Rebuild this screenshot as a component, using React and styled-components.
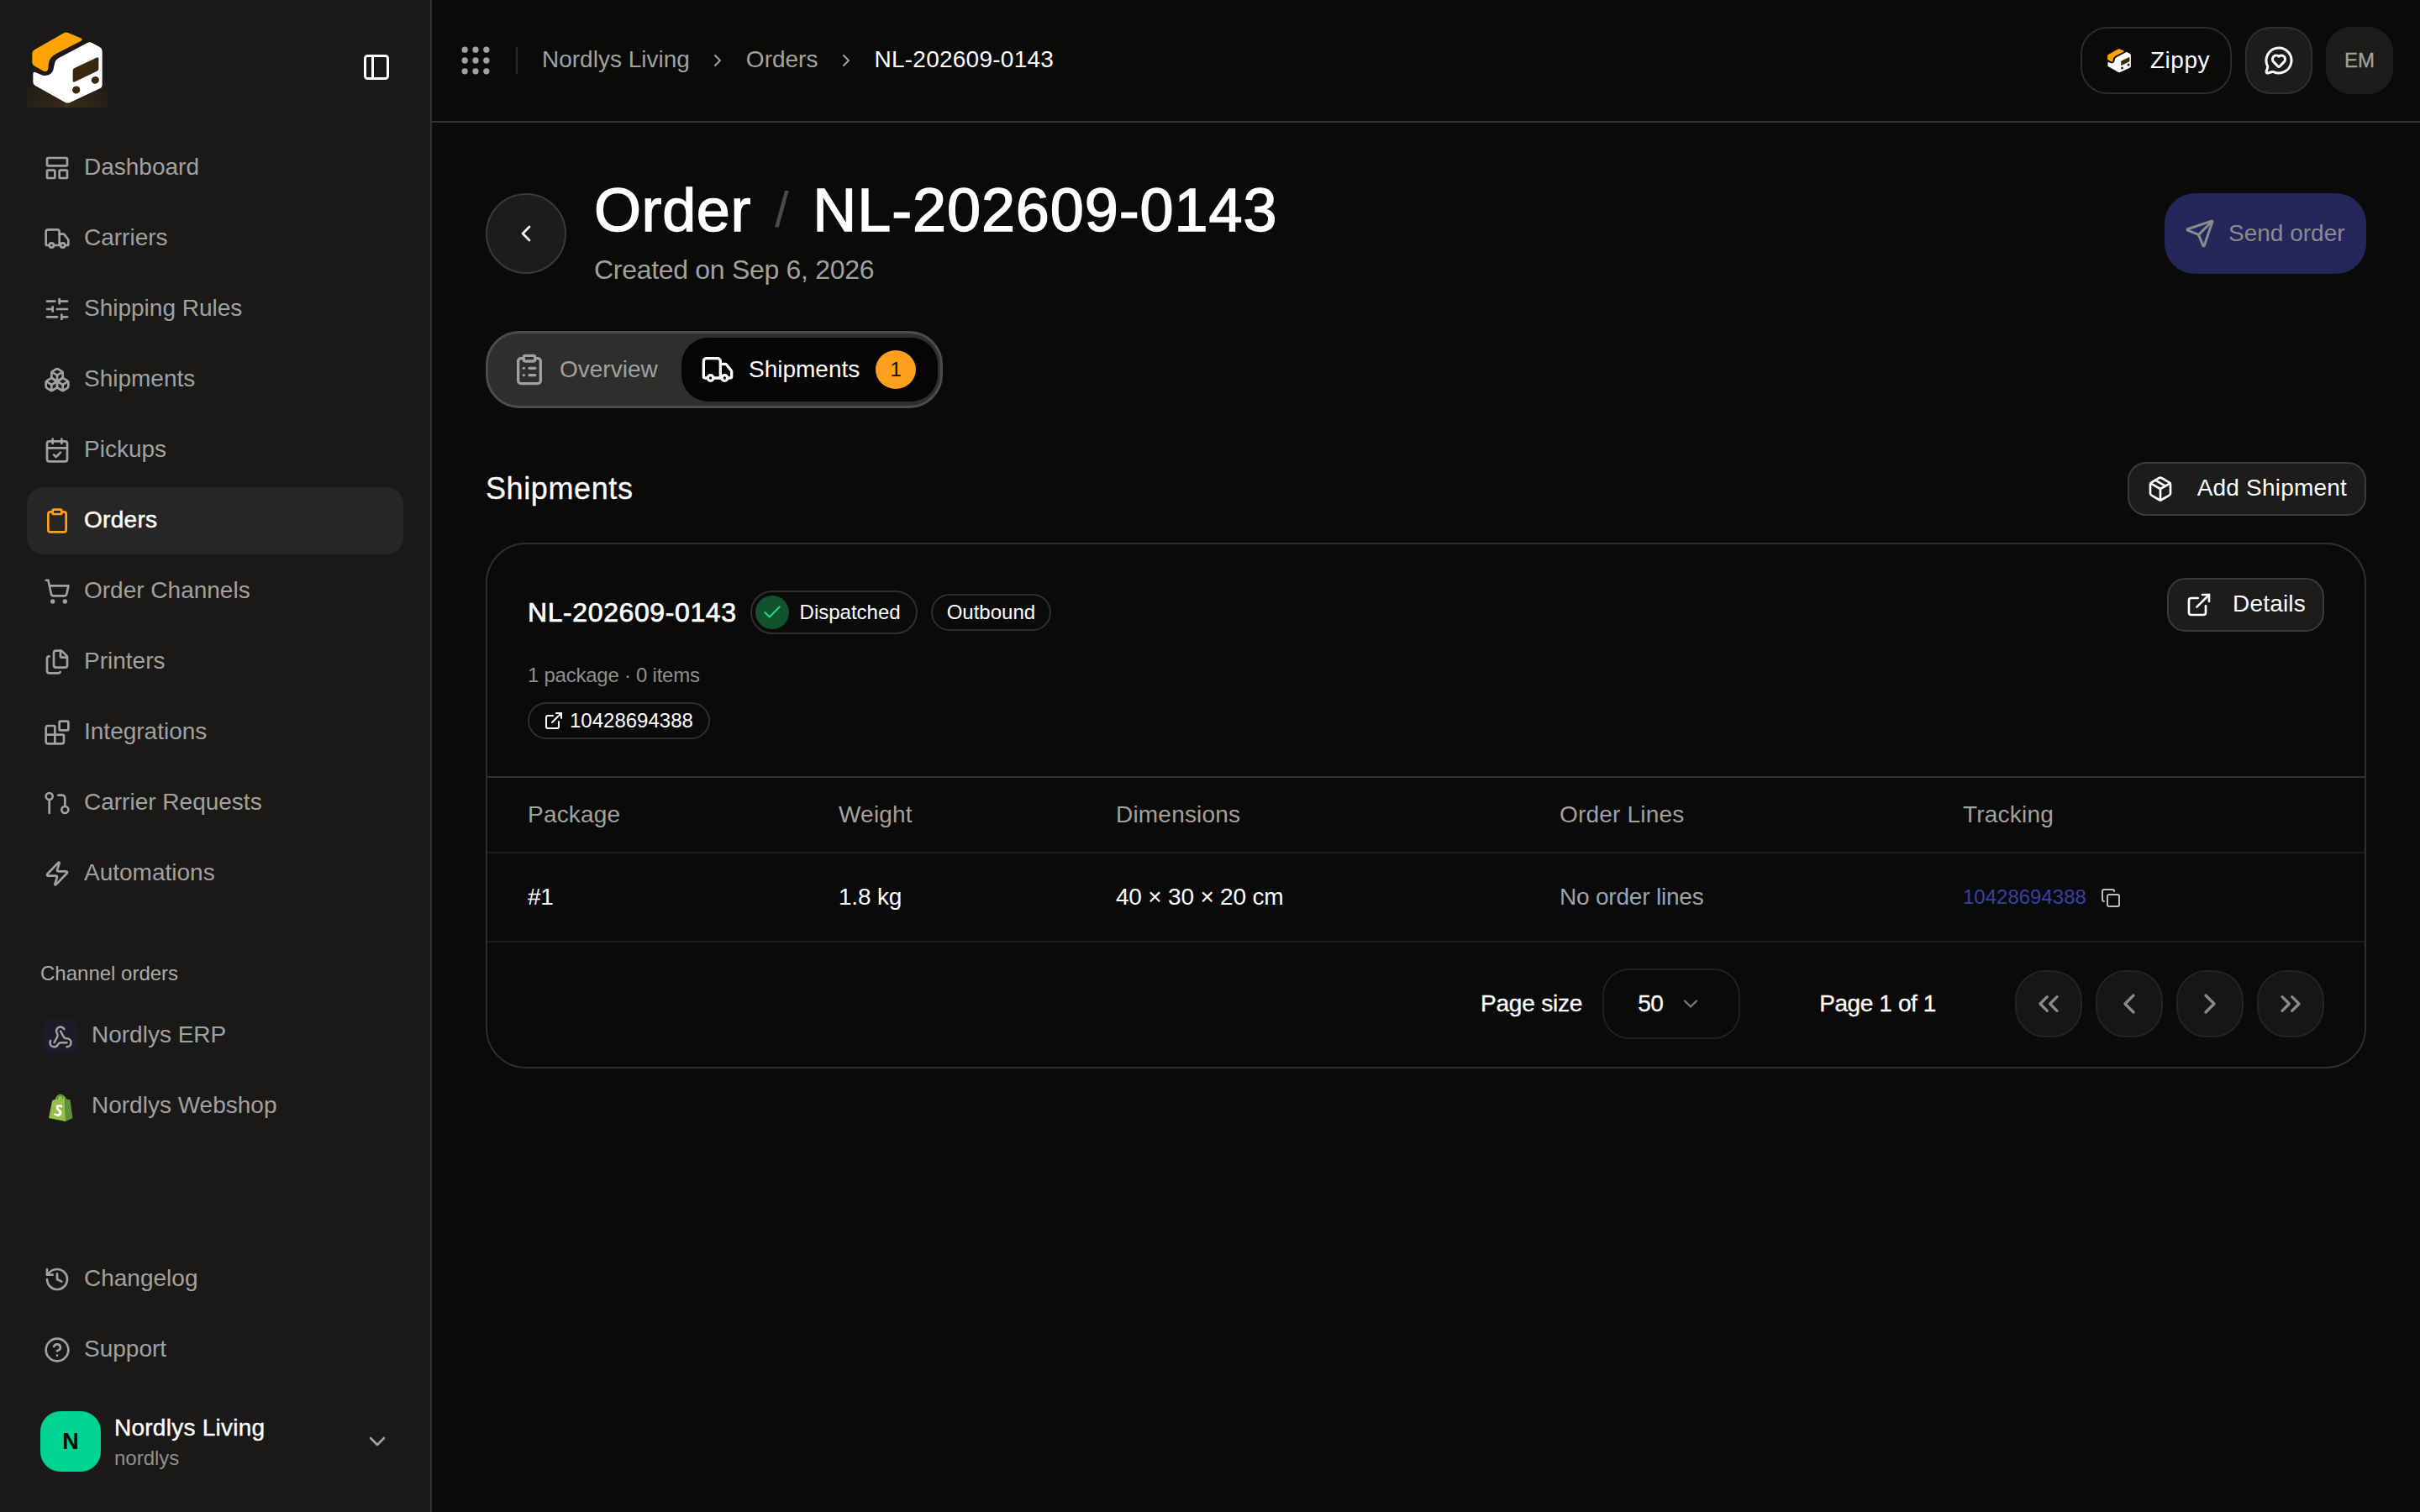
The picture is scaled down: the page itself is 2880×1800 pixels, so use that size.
import React from "react";
import styled, { createGlobalStyle } from "styled-components";
import {
  LayoutPanelTop, Truck, SlidersHorizontal, Boxes, CalendarCheck, Clipboard, ShoppingCart, Files, Blocks, Zap,
  History, CircleHelp, Webhook, ChevronDown, ChevronLeft, ChevronRight, ChevronsLeft, ChevronsRight, PanelLeft,
  Grip, MessageCircleHeart, Send, ClipboardList, Package, ExternalLink, Copy, Check,
} from "lucide-react";

const Global = createGlobalStyle`
  html, body { margin: 0; padding: 0; background: #0a0a09; }
  body { font-family: "Liberation Sans", Arial, sans-serif; color: #fff; }
  * { box-sizing: border-box; }
`;

const Shell = styled.div`display: flex; width: 2880px; height: 1800px; overflow: hidden; background: #0a0a09;`;

const Sidebar = styled.aside`
  width: 514px; flex: none; height: 100%; display: flex; flex-direction: column;
  background: #1a1918; border-right: 2px solid #333231;
`;
const LogoRow = styled.div`
  height: 160px; padding: 32px 46px 32px 32px; display: flex; align-items: center; justify-content: space-between; flex: none;
`;
const LogoBox = styled.div`
  width: 96px; height: 96px;
  background: radial-gradient(ellipse 75% 42% at 50% 100%, rgba(255,160,0,.14), rgba(255,160,0,0));
`;
const ToggleBtn = styled.div`display: flex; color: #fff;`;
const NavList = styled.nav`display: flex; flex-direction: column; gap: 4px; padding: 0 32px;`;
const NavItem = styled.div`
  height: 80px; padding-left: 20px; display: flex; align-items: center; gap: ${p => p.$gap || 16}px; border-radius: 20px;
  font-size: 28px; letter-spacing: ${p => (p.$active ? "0.3px" : "0")}; padding-bottom: 3px;
  color: ${p => (p.$active ? "#fff" : "#a1a1a0")};
  background: ${p => (p.$active ? "#262626" : "transparent")};
  -webkit-text-stroke: ${p => (p.$active ? "0.5px #fff" : "0")};
  svg { flex: none; color: ${p => (p.$active ? "#ff9f1c" : "#a1a1a0")}; margin-bottom: -3px; }
`;
const GroupLabel = styled.div`
  margin: 64px 0 19px; padding-left: 48px; font-size: 24px; line-height: 30px; color: #ababaa; height: 30px;
`;
const ChannelIcon = styled.div`
  width: 40px; height: 40px; border-radius: 8px; display: flex; align-items: center; justify-content: center; flex: none;
  background: ${p => p.$bg || "transparent"}; margin-bottom: -3px;
`;
const Bottom = styled.div`margin-top: auto; padding-bottom: 48px; display: flex; flex-direction: column;`;
const Account = styled.div`
  margin-top: 33px; padding: 0 47px 0 48px; display: flex; align-items: center; gap: 16px; height: 72px;
`;
const Avatar = styled.div`
  width: 72px; height: 72px; border-radius: 24px; background: #00d492; color: #0a0a09; font-size: 27px; font-weight: 700;
  display: flex; align-items: center; justify-content: center; flex: none;
`;
const AccountText = styled.div`flex: 1; display: flex; flex-direction: column; gap: 5px;`;
const AccountName = styled.div`font-size: 28px; line-height: 34px; color: #fff; letter-spacing: 0.25px; -webkit-text-stroke: .4px #fff;`;
const AccountSlug = styled.div`font-size: 24px; line-height: 28px; color: #8f8f8e;`;
const AccountChevron = styled.div`display: flex; color: #a1a1a0;`;

const Content = styled.div`flex: 1; min-width: 0; display: flex; flex-direction: column;`;
const Header = styled.header`
  height: 146px; flex: none; border-bottom: 2px solid #333231; display: flex; align-items: center; padding: 0 32px 0 30px;
`;
const GripWrap = styled.div`display: flex; color: #a1a1a0; margin-right: 26px;`;
const VDivider = styled.div`width: 2px; height: 32px; background: #2b2b2a; margin-right: 29px;`;
const Crumbs = styled.div`display: flex; align-items: center; flex: 1; font-size: 28px; padding-bottom: 2px; letter-spacing: 0.1px;`;
const Crumb = styled.span`color: ${p => (p.$current ? "#fff" : "#a1a1a0")}; letter-spacing: ${p => (p.$current ? "0.25px" : "0")};`;
const CrumbSep = styled.span`display: flex; color: #a1a1a0; margin: 2px 21.5px 0 21.5px;`;
const HeaderRight = styled.div`display: flex; align-items: center; gap: 16px;`;
const ZippyBtn = styled.div`
  width: 180px; height: 80px; border-radius: 32px; border: 2px solid #2c2c2b; background: #0a0a09; display: flex; align-items: center;
  padding-left: 28px; gap: 21px; font-size: 28px; color: #fff; letter-spacing: 0.5px;
`;
const SquareBtn = styled.div`
  width: 80px; height: 80px; border-radius: 30px; background: #1c1c1b; display: flex; align-items: center; justify-content: center;
  border: 2px solid ${p => (p.$plain ? "#1c1c1b" : "#2e2e2d")}; color: ${p => (p.$plain ? "#a1a1a0" : "#fff")}; font-size: 24px;
  -webkit-text-stroke: ${p => (p.$plain ? ".3px #a1a1a0" : "0")};
`;

const Main = styled.main`flex: 1; padding: 64px 64px 0;`;
const TitleRow = styled.div`display: flex; align-items: center; justify-content: space-between;`;
const TitleLeft = styled.div`display: flex; align-items: center; gap: 33px;`;
const BackBtn = styled.div`
  width: 96px; height: 96px; border-radius: 50%; background: #1c1c1b; border: 2px solid #3a3a39; display: flex; align-items: center;
  justify-content: center; color: #fff;
`;
const TitleBlock = styled.div`display: flex; flex-direction: column;`;
const Title = styled.h1`
  margin: 0; font-size: 72px; font-weight: 400; line-height: 80px; color: #fff; -webkit-text-stroke: 1.4px #fff; letter-spacing: 0.6px;
  display: flex; gap: 28px;
`;
const TitleId = styled.span`letter-spacing: 0.9px;`;
const TitleSlash = styled.span`color: #4a4a49; -webkit-text-stroke: 0; font-size: 60px;`;
const Subtitle = styled.div`margin-top: 8px; font-size: 32px; line-height: 47px; color: #a1a1a0; letter-spacing: -0.3px;`;
const PrimaryBtn = styled.div`
  height: 96px; width: 240px; border-radius: 36px; background: #24265a; display: flex; align-items: center; padding-left: 24px; gap: 16px;
  font-size: 28px; color: #8a8a8f;
`;

const TabBar = styled.div`
  margin-top: 49px; width: 544px; height: 92px; border-radius: 40px; background: #2e2e2d; border: 3px solid #4c4c4b;
  display: flex; align-items: center; padding: 0 3px 0 29px;
`;
const TabPlain = styled.div`display: flex; align-items: center; gap: 16px; flex: 1; font-size: 28px; color: #a1a1a0; padding-bottom: 1px; svg { margin-bottom: -1px; }`;
const TabActive = styled.div`
  width: 305px; height: 76px; border-radius: 32px; background: #050505; display: flex; align-items: center; padding: 0 0 1px 23px; gap: 17px;
  font-size: 28px; color: #fff; svg { margin-bottom: -1px; }
`;
const CountBadge = styled.span`
  width: 48px; height: 46px; border-radius: 50%; background: #ff9f1c; color: #111; font-size: 24px; display: flex; align-items: center;
  justify-content: center; margin-left: 2px;
`;

const SectionHead = styled.div`margin-top: 64px; height: 64px; display: flex; align-items: center; justify-content: space-between;`;
const SectionTitle = styled.h2`margin: 0; font-size: 36px; font-weight: 400; letter-spacing: .6px; color: #fff; -webkit-text-stroke: .3px #fff;`;
const SoftBtn = styled.div`
  height: 64px; border-radius: 22px; background: #1c1c1b; border: 2px solid #3a3a39; display: flex; align-items: center;
  padding: 0 ${p => p.$px}px 2px; gap: ${p => p.$gap}px; font-size: 28px; color: #fff; letter-spacing: 0.2px;
  svg { margin-bottom: -2px; }
`;

const Card = styled.section`margin-top: 32px; height: 626px; border-radius: 48px; border: 2px solid #2f2f2e; background: #0a0a0a; overflow: hidden;`;
const CardTop = styled.div`height: 278px; padding: 40px 48px 0; display: flex; justify-content: space-between; border-bottom: 2px solid #333231;`;
const ShipMeta = styled.div`display: flex; flex-direction: column;`;
const ShipLine = styled.div`display: flex; align-items: center; height: 64px; margin-top: 9px;`;
const ShipId = styled.div`font-size: 32px; letter-spacing: .6px; color: #fff; -webkit-text-stroke: .7px #fff;`;
const Pill = styled.div`
  display: flex; align-items: center; border-radius: 999px; border: 2px solid #2f2f2e; font-size: 24px; color: #fff; height: ${p => p.$h}px;
  padding: ${p => p.$pad}; margin-left: ${p => p.$ml || 0}px; gap: ${p => p.$gap || 0}px;
`;
const StatusDot = styled.span`
  width: 40px; height: 40px; border-radius: 50%; background: #11522e; color: #19d97b; display: flex; align-items: center; justify-content: center;
`;
const ShipCounts = styled.div`margin-top: 29px; font-size: 24px; line-height: 28px; color: #8f8f8e; letter-spacing: -0.25px;`;
const TrackingPill = styled(Pill)`margin-top: 18px; align-self: flex-start; svg { flex: none; }`;

const Row = styled.div`
  display: grid; grid-template-columns: 370px 330px 528px 480px 1fr; align-items: center; padding: 0 48px; height: ${p => p.$h}px;
  border-bottom: 2px solid #1d1d1c; font-size: 28px; color: ${p => (p.$head ? "#a1a1a0" : "#fff")};
  letter-spacing: ${p => (p.$head ? "0.2px" : "-0.2px")};
`;
const MutedCell = styled.div`color: #9ca3af;`;
const TrackCell = styled.div`display: flex; align-items: center; gap: 17px; font-size: 24px; color: #3a3fa6; letter-spacing: 0; svg { color: #bdbdbc; margin-top: 2px; }`;

const Pager = styled.div`height: 146px; padding: 0 48px; display: flex; align-items: center; justify-content: flex-end; font-size: 28px; color: #fff; -webkit-text-stroke: .3px #fff; letter-spacing: -0.4px;`;
const SizeLabel = styled.div`margin-right: 24px; letter-spacing: -0.2px;`;
const SizeSelect = styled.div`
  width: 164px; height: 84px; border-radius: 32px; border: 2px solid #1f1f1e; display: flex; align-items: center; padding-left: 40px; gap: 18px;
  svg { color: #777; }
`;
const PageLabel = styled.div`margin: 0 94px;`;
const PagerBtns = styled.div`display: flex; gap: 16px;`;
const PagerBtn = styled.div`
  width: 80px; height: 80px; border-radius: 36px; background: #161616; border: 2px solid #232322; display: flex; align-items: center;
  justify-content: center; color: #8a8a89;
`;

const Logo = ({ size = 96 }) => (
  <svg width={size} height={size} viewBox="36 36 288 288">
    <path fill="#ffa300" d="M55 130 Q55 122 63 118 L168 58 Q175 54 183 57 L228 76 Q238 81 228 87 L142 131 Q116 144 114 166 L112 184 Q110 199 96 194 L64 176 Q55 171 55 164 Z" />
    <path fill="#fff" d="M252 93 Q260 88 268 93 L296 108 Q305 113 305 122 L305 243 Q305 252 297 256 L190 306 Q181 310 172 305 L66 246 Q58 241 58 233 L58 204 Q58 194 68 199 L92 209 Q128 216 133 176 Q135 155 150 147 Z" />
    <path fill="#37280f" d="M200 192 Q200 186 206 183 L284 146 Q292 142 292 150 L292 185 Q292 191 286 194 L208 232 Q200 236 200 228 Z" />
    <ellipse cx="212" cy="261" rx="14" ry="13" fill="#37280f" transform="rotate(-25 212 261)" />
    <ellipse cx="280" cy="226" rx="14" ry="13" fill="#37280f" transform="rotate(-25 280 226)" />
  </svg>
);

const PullIcon = ({ size = 32 }) => (
  <svg width={size} height={size} viewBox="0 0 24 24" fill="none" stroke="currentColor" strokeWidth="2" strokeLinecap="round" strokeLinejoin="round">
    <circle cx="5" cy="6" r="3" />
    <path d="M5 9v12" />
    <circle cx="19" cy="18" r="3" />
    <path d="M13 5h3.5a2.5 2.5 0 0 1 2.5 2.5V15" />
  </svg>
);

const ShopifyBag = () => (
  <svg width="30" height="34" viewBox="0 0 30 34">
    <path fill="#95bf47" d="M1 29 L5 9 Q5 8 6.500 7.500 L9 6.800 C10 2.500 13 .6 15.500 .8 Q18 1 20.500 4 L21 33 Z" />
    <path fill="#5e8e3e" d="M20.500 4 L23 6.800 L26.500 7.200 L29.500 29 L21 33 Z" />
    <path fill="none" stroke="#4f7a33" strokeWidth="1.200" d="M11 7 C11.500 4 13 2 15.500 2.200 C17.500 2.400 18 4 18 6" />
    <path fill="none" stroke="#fff" strokeWidth="2.800" strokeLinecap="round" d="M16 15 C13.500 13.600 10.500 14.600 11 17 C11.500 19.400 15.500 19.600 15 23 C14.500 26 11 26 8.500 24.600" />
  </svg>
);

const mainNav = [
  ["Dashboard", LayoutPanelTop], ["Carriers", Truck], ["Shipping Rules", SlidersHorizontal], ["Shipments", Boxes],
  ["Pickups", CalendarCheck], ["Orders", Clipboard, true], ["Order Channels", ShoppingCart], ["Printers", Files],
  ["Integrations", Blocks], ["Carrier Requests", PullIcon], ["Automations", Zap],
];

export default function App() {
  return (
    <Shell>
      <Global />
      <Sidebar>
        <LogoRow>
          <LogoBox><Logo /></LogoBox>
          <ToggleBtn><PanelLeft size={36} /></ToggleBtn>
        </LogoRow>
        <NavList>
          {mainNav.map(([label, Icon, active]) => (
            <NavItem key={label} $active={active}><Icon size={32} />{label}</NavItem>
          ))}
        </NavList>
        <GroupLabel>Channel orders</GroupLabel>
        <NavList>
          <NavItem $gap={17}>
            <ChannelIcon $bg="#1c1c28"><Webhook size={30} /></ChannelIcon>Nordlys ERP
          </NavItem>
          <NavItem $gap={17}>
            <ChannelIcon><ShopifyBag /></ChannelIcon>Nordlys Webshop
          </NavItem>
        </NavList>
        <Bottom>
          <NavList>
            <NavItem><History size={32} />Changelog</NavItem>
            <NavItem><CircleHelp size={32} />Support</NavItem>
          </NavList>
          <Account>
            <Avatar>N</Avatar>
            <AccountText>
              <AccountName>Nordlys Living</AccountName>
              <AccountSlug>nordlys</AccountSlug>
            </AccountText>
            <AccountChevron><ChevronDown size={32} /></AccountChevron>
          </Account>
        </Bottom>
      </Sidebar>
      <Content>
        <Header>
          <GripWrap><Grip size={44} /></GripWrap>
          <VDivider />
          <Crumbs>
            <Crumb>Nordlys Living</Crumb>
            <CrumbSep><ChevronRight size={24} /></CrumbSep>
            <Crumb>Orders</Crumb>
            <CrumbSep><ChevronRight size={24} /></CrumbSep>
            <Crumb $current>NL-202609-0143</Crumb>
          </Crumbs>
          <HeaderRight>
            <ZippyBtn><Logo size={32} />Zippy</ZippyBtn>
            <SquareBtn><MessageCircleHeart size={36} /></SquareBtn>
            <SquareBtn $plain>EM</SquareBtn>
          </HeaderRight>
        </Header>
        <Main>
          <TitleRow>
            <TitleLeft>
              <BackBtn><ChevronLeft size={32} /></BackBtn>
              <TitleBlock>
                <Title>Order <TitleSlash>/</TitleSlash> <TitleId>NL-202609-0143</TitleId></Title>
                <Subtitle>Created on Sep 6, 2026</Subtitle>
              </TitleBlock>
            </TitleLeft>
            <PrimaryBtn><Send size={36} />Send order</PrimaryBtn>
          </TitleRow>
          <TabBar>
            <TabPlain><ClipboardList size={40} />Overview</TabPlain>
            <TabActive><Truck size={40} />Shipments<CountBadge>1</CountBadge></TabActive>
          </TabBar>
          <SectionHead>
            <SectionTitle>Shipments</SectionTitle>
            <SoftBtn $gap={28} $px={21}><Package size={32} />Add Shipment</SoftBtn>
          </SectionHead>
          <Card>
            <CardTop>
              <ShipMeta>
                <ShipLine>
                  <ShipId>NL-202609-0143</ShipId>
                  <Pill $h={52} $pad="0 18px 0 4px" $ml={16} $gap={13}>
                    <StatusDot><Check size={26} /></StatusDot>Dispatched
                  </Pill>
                  <Pill $h={44} $pad="0 17px" $ml={16}>Outbound</Pill>
                </ShipLine>
                <ShipCounts>1 package · 0 items</ShipCounts>
                <TrackingPill $h={44} $pad="0 18px 0 17px" $gap={7}><ExternalLink size={24} />10428694388</TrackingPill>
              </ShipMeta>
              <SoftBtn $gap={24} $px={20}><ExternalLink size={32} />Details</SoftBtn>
            </CardTop>
            <Row $head $h={90}>
              <div>Package</div><div>Weight</div><div>Dimensions</div><div>Order Lines</div><div>Tracking</div>
            </Row>
            <Row $h={106}>
              <div>#1</div><div>1.8 kg</div><div>40 × 30 × 20 cm</div>
              <MutedCell>No order lines</MutedCell>
              <TrackCell>10428694388<Copy size={24} /></TrackCell>
            </Row>
            <Pager>
              <SizeLabel>Page size</SizeLabel>
              <SizeSelect>50<ChevronDown size={28} /></SizeSelect>
              <PageLabel>Page 1 of 1</PageLabel>
              <PagerBtns>
                <PagerBtn><ChevronsLeft size={40} /></PagerBtn>
                <PagerBtn><ChevronLeft size={40} /></PagerBtn>
                <PagerBtn><ChevronRight size={40} /></PagerBtn>
                <PagerBtn><ChevronsRight size={40} /></PagerBtn>
              </PagerBtns>
            </Pager>
          </Card>
        </Main>
      </Content>
    </Shell>
  );
}
